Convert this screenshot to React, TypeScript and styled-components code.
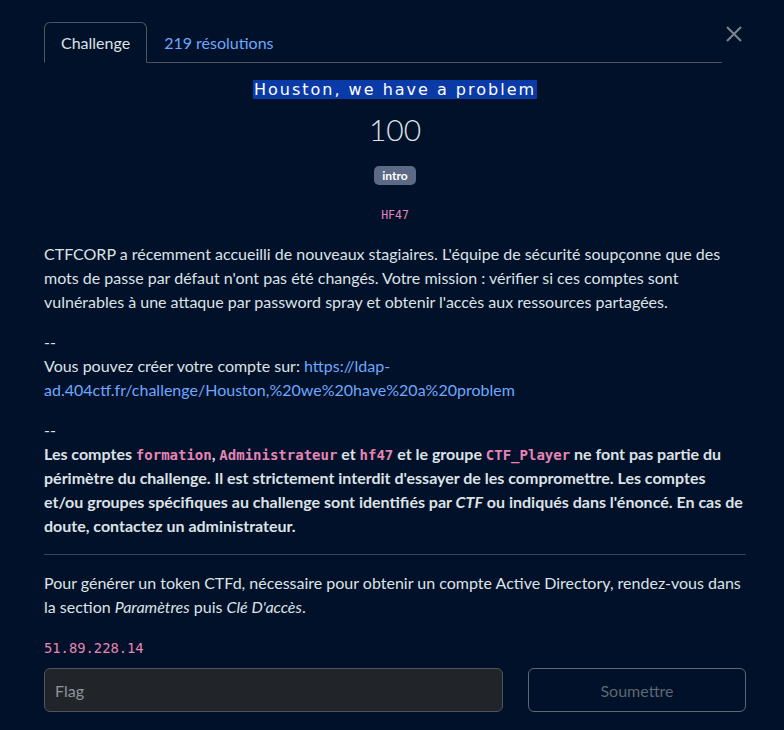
import React from "react";
import styled, { createGlobalStyle } from "styled-components";

const Global = createGlobalStyle`
  html, body { margin: 0; padding: 0; background: #001129; }
  body {
    font-family: Lato, "Noto Sans", sans-serif;
    font-size: 16px;
    line-height: 24px;
    color: #dee2e6;
  }
  * { box-sizing: border-box; }
`;

const Page = styled.div`
  padding: 22px 38px 0 44px;
  min-height: 730px;
`;

const Header = styled.div`
  display: flex;
  align-items: flex-start;
`;

const Tabs = styled.nav`
  flex: 1;
  display: flex;
  border-bottom: 1px solid #4d5560;
`;

const Tab = styled.div<{ $active?: boolean }>`
  padding: 8px 16px;
  margin-bottom: -1px;
  border: 1px solid ${(p) => (p.$active ? "#4d5560" : "transparent")};
  border-bottom-color: ${(p) => (p.$active ? "#001129" : "transparent")};
  border-radius: 6px 6px 0 0;
  color: ${(p) => (p.$active ? "#dee2e6" : "#6ea8fe")};
  line-height: 23px;
`;

const Close = styled.button`
  width: 24px;
  height: 24px;
  padding: 0;
  border: 0;
  background: transparent;
  display: flex;
  align-items: center;
  justify-content: center;
`;

const Center = styled.div`
  text-align: center;
`;

const Title = styled.h3`
  margin: 17px 0 0;
  font-family: "DejaVu Sans", sans-serif;
  font-weight: 400;
  font-size: 16px;
  line-height: 20px;
  letter-spacing: 2px;
  color: #ffffff;
  span {
    background: #0a3aa8;
    padding: 0 1px;
  }
`;

const Points = styled.div`
  margin-top: 9px;
  font-size: 30px;
  font-weight: 300;
  line-height: 40px;
  color: #dee2e6;
`;

const Badge = styled.span`
  display: inline-block;
  margin-top: 17px;
  padding: 0 8px;
  height: 19px;
  line-height: 19px;
  font-size: 12px;
  font-weight: 700;
  color: #ffffff;
  background: #5c6a86;
  border-radius: 5px;
  vertical-align: top;
`;

const Author = styled.div`
  margin-top: 22px;
  font-family: "DejaVu Sans Mono", monospace;
  font-size: 11.5px;
  line-height: 16px;
  color: #e685b5;
`;

const Desc = styled.div`
  margin-top: 19px;
`;

const P = styled.p<{ $last?: boolean }>`
  margin: 0 0 ${(p) => (p.$last ? "0" : "16px")};
`;

const Link = styled.a`
  color: #6ea8fe;
  text-decoration: none;
`;

const Code = styled.code`
  font-family: "DejaVu Sans Mono", monospace;
  font-size: 14px;
  line-height: 1;
  color: #e685b5;
`;

const Rule = styled.hr`
  margin: 0 0 16px;
  border: 0;
  border-top: 1px solid #38435a;
`;

const Ip = styled.div`
  font-family: "DejaVu Sans Mono", monospace;
  font-size: 13.8px;
  line-height: 24px;
  color: #e685b5;
  margin-top: 17px;
`;

const Form = styled.form`
  display: grid;
  grid-template-columns: 1fr 218px;
  gap: 25px;
  margin-top: 8px;
`;

const Input = styled.input`
  height: 44px;
  padding: 0 10px;
  background: #212529;
  border: 1px solid #4d5560;
  border-radius: 6px;
  font-family: Lato, sans-serif;
  font-size: 16px;
  color: #dee2e6;
  outline: none;
  &::placeholder { color: #8e949b; }
`;

const Submit = styled.button`
  height: 44px;
  background: transparent;
  border: 1px solid #5f6772;
  border-radius: 6px;
  font-family: Lato, sans-serif;
  font-size: 16px;
  color: #5f6772;
`;

export default function App() {
  return (
    <>
      <Global />
      <Page>
        <Header>
          <Tabs>
            <Tab $active>Challenge</Tab>
            <Tab>219 résolutions</Tab>
          </Tabs>
          <Close aria-label="Fermer">
            <svg width="16" height="16" viewBox="0 0 16 16">
              <path d="M1 1L15 15M15 1L1 15" stroke="#7d8591" strokeWidth="2" fill="none" />
            </svg>
          </Close>
        </Header>
        <Center>
          <Title>
            <span>Houston, we have a problem</span>
          </Title>
          <Points>100</Points>
          <Badge>intro</Badge>
          <Author>HF47</Author>
        </Center>
        <Desc>
          <P>
            CTFCORP a récemment accueilli de nouveaux stagiaires. L'équipe de sécurité soupçonne que des
            mots de passe par défaut n'ont pas été changés. Votre mission : vérifier si ces comptes sont
            vulnérables à une attaque par password spray et obtenir l'accès aux ressources partagées.
          </P>
          <P>
            --
            <br />
            Vous pouvez créer votre compte sur:{" "}
            <Link href="#">https://ldap-ad.404ctf.fr/challenge/Houston,%20we%20have%20a%20problem</Link>
          </P>
          <P>
            --
            <br />
            <strong>
              Les comptes <Code>formation</Code>, <Code>Administrateur</Code> et <Code>hf47</Code> et le
              groupe <Code>CTF_Player</Code> ne font pas partie du périmètre du challenge. Il est
              strictement interdit d'essayer de les compromettre. Les comptes et/ou groupes spécifiques
              au challenge sont identifiés par <em>CTF</em> ou indiqués dans l'énoncé. En cas de doute,
              contactez un administrateur.
            </strong>
          </P>
          <Rule />
          <P $last>
            Pour générer un token CTFd, nécessaire pour obtenir un compte Active Directory, rendez-vous dans
            la section <em>Paramètres</em> puis <em>Clé D'accès</em>.
          </P>
        </Desc>
        <Ip>51.89.228.14</Ip>
        <Form onSubmit={(e) => e.preventDefault()}>
          <Input placeholder="Flag" />
          <Submit type="submit">Soumettre</Submit>
        </Form>
      </Page>
    </>
  );
}
